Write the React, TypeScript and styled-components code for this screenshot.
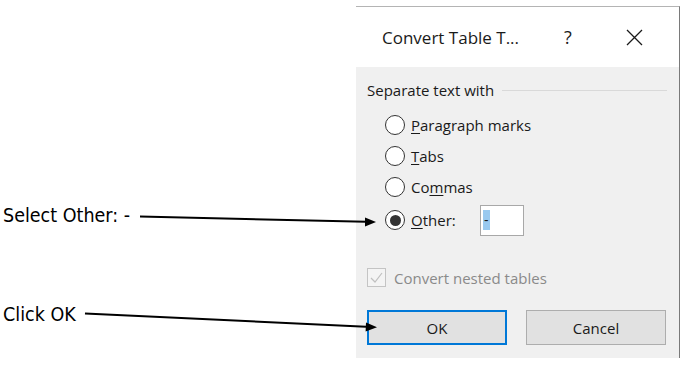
import React from "react";
import styled, { createGlobalStyle } from "styled-components";

const Global = createGlobalStyle`
  html, body { margin: 0; padding: 0; background: #ffffff; }
  body { width: 688px; height: 368px; overflow: hidden; }
`;

const Page = styled.div`
  position: relative;
  width: 688px;
  height: 368px;
  display: flex;
  flex-direction: row;
  background: #ffffff;
`;

const Notes = styled.div`
  width: 356px;
  display: flex;
  flex-direction: column;
  padding-left: 3px;
  box-sizing: border-box;
  font-family: "DejaVu Sans Condensed", "DejaVu Sans", sans-serif;
  font-size: 19.5px;
  color: #000;
`;

const Note = styled.div<{ $top: number }>`
  margin-top: ${(p) => p.$top}px;
  height: 24px;
  line-height: 24px;
  white-space: nowrap;
`;

const Dialog = styled.div`
  margin-top: 6px;
  width: 323px;
  height: 351px;
  border-top: 1px solid #b4b4b4;
  border-right: 1px solid #7a7a7a;
  display: flex;
  flex-direction: column;
  font-family: "Open Sans", "Noto Sans", sans-serif;
  color: #1a1a1a;
`;

const TitleBar = styled.div`
  height: 60px;
  background: #ffffff;
  display: flex;
  align-items: center;
  padding-left: 26px;
`;

const Title = styled.div`
  font-size: 17px;
  width: 180px;
  white-space: nowrap;
`;

const Help = styled.div`
  font-size: 18px;
  margin-left: 2px;
  width: 62px;
`;

const CloseIcon = () => (
  <svg width="17" height="17" viewBox="0 0 17 17">
    <path d="M1 1 L16 16 M16 1 L1 16" stroke="#1a1a1a" strokeWidth="1.3" fill="none" />
  </svg>
);

const Body = styled.div`
  flex: 1;
  background: #f0f0f0;
  display: flex;
  flex-direction: column;
  padding: 13px 12px 0 11px;
  font-size: 15px;
`;

const GroupHeader = styled.div`
  display: flex;
  align-items: center;
  height: 20px;
  gap: 8px;
  margin-bottom: 9px;
`;

const Rule = styled.div`
  flex: 1;
  height: 1px;
  background: #d9d9d9;
`;

const Options = styled.div`
  display: flex;
  flex-direction: column;
  padding-left: 18px;
`;

const OptionRow = styled.div<{ $h: number }>`
  height: ${(p) => p.$h}px;
  display: flex;
  align-items: center;
`;

const Radio = styled.span<{ $on?: boolean }>`
  width: 20px;
  height: 20px;
  box-sizing: border-box;
  border-radius: 50%;
  border: 1.5px solid #333333;
  background: #ffffff;
  display: flex;
  align-items: center;
  justify-content: center;
  margin-right: 6px;
  &::after {
    content: "";
    display: ${(p) => (p.$on ? "block" : "none")};
    width: 11px;
    height: 11px;
    border-radius: 50%;
    background: #333333;
  }
`;

const Label = styled.span`
  white-space: nowrap;
  u { text-decoration-thickness: 1px; text-underline-offset: 2px; }
`;

const OtherLabel = styled(Label)`
  width: 69px;
`;

const TextBox = styled.div`
  width: 44px;
  height: 31px;
  box-sizing: border-box;
  border: 1px solid #a8a8a8;
  background: #ffffff;
  display: flex;
  align-items: center;
  padding-left: 2px;
`;

const Selected = styled.span`
  background: #99c9ef;
  color: #1a1a1a;
  height: 20px;
  line-height: 20px;
  padding: 0 1px;
  font-size: 14px;
`;

const CheckRow = styled.div`
  margin-top: 30px;
  height: 19px;
  display: flex;
  align-items: center;
  gap: 8px;
  color: #8a8a8a;
`;

const CheckBox = styled.span`
  width: 19px;
  height: 19px;
  box-sizing: border-box;
  border: 1px solid #c4c4c4;
  background: #f4f4f4;
  display: flex;
  align-items: center;
  justify-content: center;
`;

const Buttons = styled.div`
  margin-top: 23px;
  display: flex;
  gap: 19px;
`;

const Button = styled.div<{ $default?: boolean }>`
  width: 140px;
  height: 35px;
  box-sizing: border-box;
  background: #e1e1e1;
  border: ${(p) => (p.$default ? "2px solid #0078d7" : "1px solid #adadad")};
  display: flex;
  align-items: center;
  justify-content: center;
  font-size: 15px;
  color: #1a1a1a;
`;

const Arrows = styled.svg`
  position: absolute;
  left: 0;
  top: 0;
  pointer-events: none;
`;

export default function App() {
  return (
    <Page>
      <Global />
      <Notes>
        <Note $top={204}>Select Other: -</Note>
        <Note $top={75}>Click OK</Note>
      </Notes>
      <Dialog>
        <TitleBar>
          <Title>Convert Table T...</Title>
          <Help>?</Help>
          <CloseIcon />
        </TitleBar>
        <Body>
          <GroupHeader>
            <span>Separate text with</span>
            <Rule />
          </GroupHeader>
          <Options>
            <OptionRow $h={31}>
              <Radio />
              <Label><u>P</u>aragraph marks</Label>
            </OptionRow>
            <OptionRow $h={31}>
              <Radio />
              <Label><u>T</u>abs</Label>
            </OptionRow>
            <OptionRow $h={31}>
              <Radio />
              <Label>Co<u>m</u>mas</Label>
            </OptionRow>
            <OptionRow $h={36}>
              <Radio $on />
              <OtherLabel><u>O</u>ther:</OtherLabel>
              <TextBox>
                <Selected>-</Selected>
              </TextBox>
            </OptionRow>
          </Options>
          <CheckRow>
            <CheckBox>
              <svg width="15" height="15" viewBox="0 0 15 15">
                <path d="M2 8 L6 12 L13 3" stroke="#c0c0c0" strokeWidth="1.2" fill="none" />
              </svg>
            </CheckBox>
            <span>Convert nested tables</span>
          </CheckRow>
          <Buttons>
            <Button $default>OK</Button>
            <Button>Cancel</Button>
          </Buttons>
        </Body>
      </Dialog>
      <Arrows width="688" height="368" viewBox="0 0 688 368">
        <path d="M140 216.5 L366 221.8" stroke="#000" strokeWidth="2" fill="none" />
        <path d="M376 222 L365 217.5 L365 226.5 Z" fill="#000" />
        <path d="M85 313.5 L366 326.8" stroke="#000" strokeWidth="2" fill="none" />
        <path d="M377 327.3 L366 322.5 L365.6 331.5 Z" fill="#000" />
      </Arrows>
    </Page>
  );
}
